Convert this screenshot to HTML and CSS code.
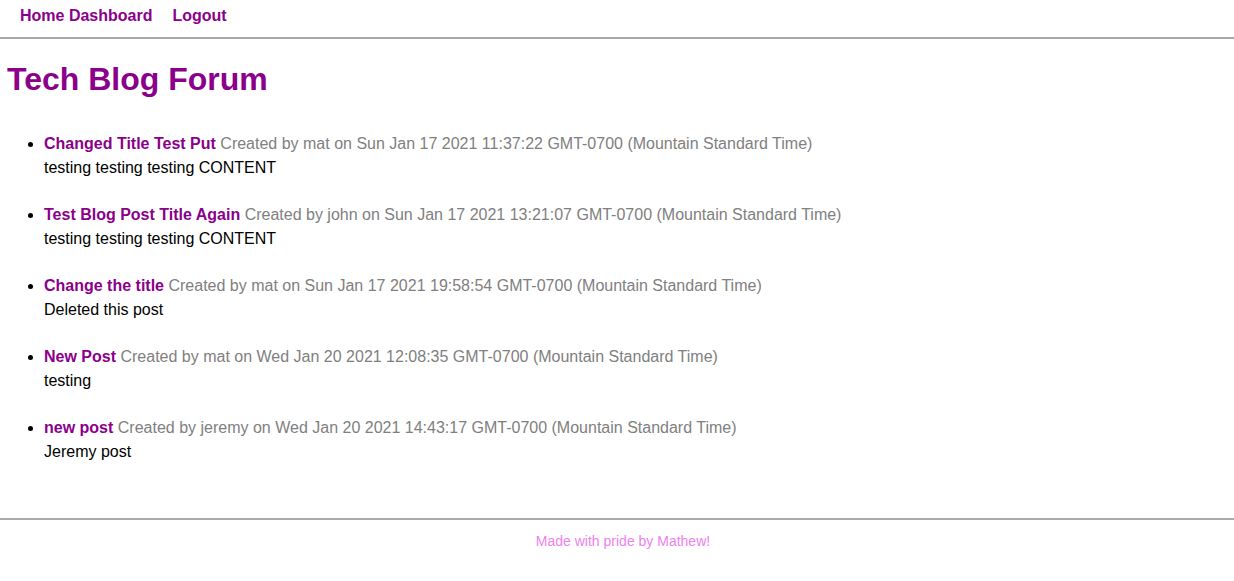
FILE: index.html
```html
<!DOCTYPE html>
<html>
<head>
<meta charset="utf-8">
<link rel="stylesheet" href="styles.css">
</head>
<body>
<nav class="nav">
  <a class="nav-link" href="#">Home Dashboard</a>
  <a class="nav-link" href="#">Logout</a>
</nav>
<main class="main">
  <h1 class="title">Tech Blog Forum</h1>
  <ul class="posts">
    <li class="post">
      <div class="post-head"><a class="post-title" href="#">Changed Title Test Put</a> <span class="meta">Created by mat on Sun Jan 17 2021 11:37:22 GMT-0700 (Mountain Standard Time)</span></div>
      <div class="post-body">testing testing testing CONTENT</div>
    </li>
    <li class="post">
      <div class="post-head"><a class="post-title" href="#">Test Blog Post Title Again</a> <span class="meta">Created by john on Sun Jan 17 2021 13:21:07 GMT-0700 (Mountain Standard Time)</span></div>
      <div class="post-body">testing testing testing CONTENT</div>
    </li>
    <li class="post">
      <div class="post-head"><a class="post-title" href="#">Change the title</a> <span class="meta">Created by mat on Sun Jan 17 2021 19:58:54 GMT-0700 (Mountain Standard Time)</span></div>
      <div class="post-body">Deleted this post</div>
    </li>
    <li class="post">
      <div class="post-head"><a class="post-title" href="#">New Post</a> <span class="meta">Created by mat on Wed Jan 20 2021 12:08:35 GMT-0700 (Mountain Standard Time)</span></div>
      <div class="post-body">testing</div>
    </li>
    <li class="post">
      <div class="post-head"><a class="post-title" href="#">new post</a> <span class="meta">Created by jeremy on Wed Jan 20 2021 14:43:17 GMT-0700 (Mountain Standard Time)</span></div>
      <div class="post-body">Jeremy post</div>
    </li>
  </ul>
</main>
<footer class="footer">Made with pride by Mathew!</footer>
</body>
</html>
```
FILE: styles.css
```css
html, body {
  margin: 0;
  padding: 0;
  background: #fff;
  font-family: "Liberation Sans", Arial, sans-serif;
  font-size: 16px;
  color: #000;
}
.nav {
  display: flex;
  gap: 20px;
  padding: 6px 20px 0;
  height: 31px;
  border-bottom: 2px solid #a9a9a9;
  line-height: 20px;
}
.nav-link {
  color: #8b008b;
  font-weight: bold;
  text-decoration: none;
}
.main {
  padding: 0 7px;
  height: 479px;
}
.title {
  margin: 0;
  padding-top: 22px;
  font-size: 32px;
  line-height: 37px;
  color: #8b008b;
}
.posts {
  margin: 34px 0 0;
  padding-left: 37px;
}
.post {
  line-height: 24px;
  margin-bottom: 23px;
}
.post-title {
  color: #8b008b;
  font-weight: bold;
  text-decoration: none;
}
.meta {
  color: #808080;
}
.footer {
  border-top: 2px solid #a9a9a9;
  text-align: center;
  color: #ee82ee;
  font-size: 14px;
  padding: 12px 0 0 12px;
  line-height: 18px;
}
```
